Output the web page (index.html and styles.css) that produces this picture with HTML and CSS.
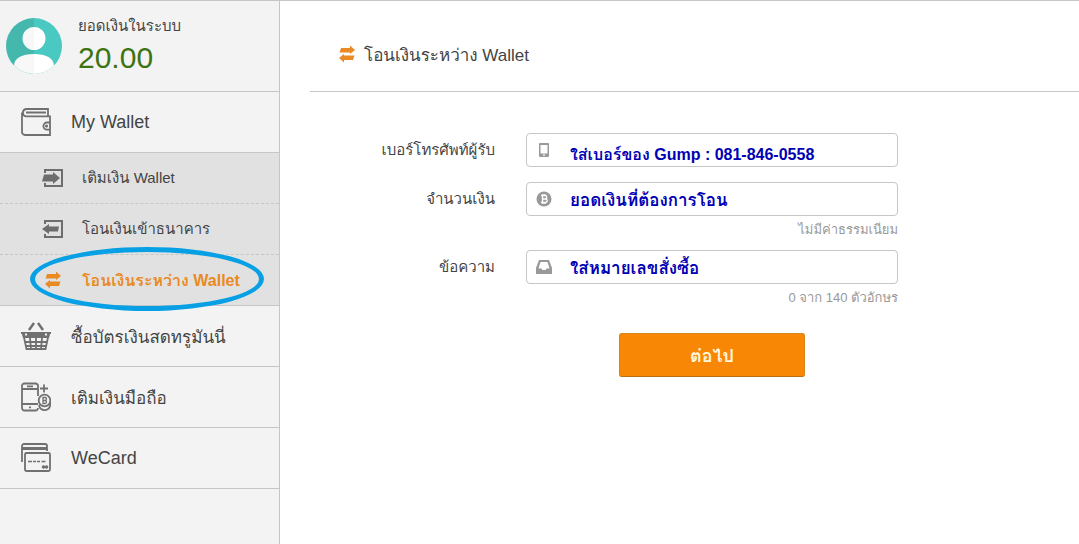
FILE: index.html
```html
<!DOCTYPE html>
<html lang="th">
<head>
<meta charset="utf-8">
<meta name="viewport" content="width=device-width, initial-scale=1">
<title>โอนเงินระหว่าง Wallet</title>
<link rel="stylesheet" href="styles.css">
</head>
<body>
<div class="layout">
  <aside class="sidebar">
    <div class="profile">
      <svg class="avatar" viewBox="0 0 56 56" aria-hidden="true">
        <defs><clipPath id="disc"><circle cx="28" cy="28" r="28"/></clipPath></defs>
        <g clip-path="url(#disc)">
          <path fill="#45b8ae" d="M0 0h28v56H0z"/>
          <path fill="#49c9c1" d="M28 0h28v56H28z"/>
          <path fill="#f8f8f8" d="M28 9a11.500 11.500 0 0 0 0 23zM28 36C16 36 8 40 8 48v8h20z"/>
          <path fill="#fff" d="M28 9a11.500 11.500 0 0 1 0 23zM28 36c12 0 20 4 20 12v8H28z"/>
        </g>
      </svg>
      <div class="balance">
        <span class="balance-label">ยอดเงินในระบบ</span>
        <strong class="balance-value">20.00</strong>
      </div>
    </div>
    <nav>
      <ul class="menu">
        <li class="menu-item">
          <a class="menu-link" href="#">
            <svg class="menu-icon" viewBox="0 0 30 30" aria-hidden="true">
              <path d="M27 8.500V2H5a3.700 3.700 0 0 0 0 7.300h24V15M29 23v5H4a3 3 0 0 1-3-3V5.500M5 5.500h20M29 15.500h-3a3.600 3.600 0 0 0 0 7.200h3z"/>
              <circle class="solid" cx="25.500" cy="19" r="1.600"/>
            </svg>
            <span>My Wallet</span>
          </a>
          <ul class="submenu">
            <li><a class="submenu-link" href="#">
              <svg class="submenu-icon" viewBox="0 0 22 20" aria-hidden="true">
                <path class="frame" d="M3 5V2h17v16H3v-3"/>
                <path class="solid" d="M2 6.500h9V4l7 6-7 6v-2.500H0z"/>
              </svg>
              <span>เติมเงิน Wallet</span>
            </a></li>
            <li><a class="submenu-link" href="#">
              <svg class="submenu-icon" viewBox="0 0 22 20" aria-hidden="true">
                <path class="frame" d="M3 5V2h17v16H3v-3"/>
                <path class="solid" d="M0 10l7-5v2.500h10l-1 5H7V15z"/>
              </svg>
              <span>โอนเงินเข้าธนาคาร</span>
            </a></li>
            <li class="circled"><a class="submenu-link active" href="#" aria-current="page">
              <svg class="submenu-icon" viewBox="0 0 22 20" aria-hidden="true">
                <path class="solid" d="M5 4h9V1.500L19 6l-5 4V8.500H3.500zM18.500 11.500L17 16H8v2.500L3 14l5-4v1.500z"/>
              </svg>
              <span>โอนเงินระหว่าง Wallet</span>
            </a>
            <span class="highlight"></span></li>
          </ul>
        </li>
        <li class="menu-item">
          <a class="menu-link thai" href="#">
            <svg class="menu-icon" viewBox="0 0 30 30" aria-hidden="true">
              <path class="solid" d="M0 11h30v2h-1l-1 4H2l-1-4H0z"/>
              <path d="M2.500 14l3 14h19l3-14M9 17l1 11M15 17v11M21 17l-1 11M4 21h22M5 25h20"/>
              <path class="thick" d="M8 9l5-7M22 9l-5-7"/>
              <path class="dots" d="M4 13.500h2M24 13.500h2"/>
            </svg>
            <span>ซื้อบัตรเงินสดทรูมันนี่</span>
          </a>
        </li>
        <li class="menu-item">
          <a class="menu-link thai" href="#">
            <svg class="menu-icon" viewBox="0 0 30 30" aria-hidden="true">
              <path d="M17 14V4a2.500 2.500 0 0 0-2.500-2.500h-11A2.500 2.500 0 0 0 1 4v22a2.500 2.500 0 0 0 2.500 2.500h11A2.500 2.500 0 0 0 17 26M1 7h16M1 22h16M6 4.300h6M8 25.300h2M19 6.500h8M23 2.500v8"/>
              <circle cx="23.500" cy="18.500" r="5.800"/>
              <path d="M18 23c1 7 11 7 11.300-1v-2"/>
              <path class="thin" d="M22 15.500v6h2a1.500 1.500 0 0 0 0-3h-2 2a1.500 1.500 0 0 0 0-3z"/>
            </svg>
            <span>เติมเงินมือถือ</span>
          </a>
        </li>
        <li class="menu-item">
          <a class="menu-link" href="#">
            <svg class="menu-icon" viewBox="0 0 30 30" aria-hidden="true">
              <path d="M1 19V3a2 2 0 0 1 2-2h21a2 2 0 0 1 2 2v5"/>
              <path class="solid" d="M1 4h25v3H1z"/>
              <rect x="4" y="10" width="25" height="18" rx="1.500"/>
              <path class="thin" d="M7 18.500h4M12 18.500h3M16 18.500h3M20.500 18.500h4"/>
              <circle class="solid" cx="22.500" cy="24" r="1.800"/>
              <circle class="solid" cx="25.500" cy="24" r="1.800"/>
            </svg>
            <span>WeCard</span>
          </a>
        </li>
      </ul>
    </nav>
  </aside>
  <main class="content">
    <header class="page-head">
      <svg class="head-icon" viewBox="2 1 18 18" aria-hidden="true">
        <path d="M5 4h9V1.500L19 6l-5 4V8.500H3.500zM18.500 11.500L17 16H8v2.500L3 14l5-4v1.500z"/>
      </svg>
      <h1 class="page-title">โอนเงินระหว่าง Wallet</h1>
    </header>
    <form class="form">
      <label class="label" for="phone">เบอร์โทรศัพท์ผู้รับ</label>
      <div class="field field-spaced">
        <svg class="field-icon" viewBox="0 0 16 16" aria-hidden="true">
          <path fill-rule="evenodd" d="M4 1h8a1 1 0 0 1 1 1v12a1 1 0 0 1-1 1H4a1 1 0 0 1-1-1V2a1 1 0 0 1 1-1zM4.500 3v8.500h7V3zM7 12.500h2v1.200H7z"/>
        </svg>
        <input class="input input-phone" id="phone" type="text" value="ใส่เบอร์ของ Gump : 081-846-0558">
      </div>
      <label class="label" for="amount">จำนวนเงิน</label>
      <div class="field">
        <svg class="field-icon" viewBox="0 0 16 16" aria-hidden="true">
          <circle cx="8" cy="8" r="7.500"/>
          <path class="coin-mark" d="M5 4.500h4a1.600 1.600 0 0 1 0 3.500H6.500 9.500a1.700 1.700 0 0 1 0 3.500H5M6.500 4.500v7M7 3v1.500M9 3v1.500M7 11.500V13M9 11.500V13"/>
        </svg>
        <input class="input" id="amount" type="text" value="ยอดเงินที่ต้องการโอน" aria-describedby="fee">
      </div>
      <p class="hint" id="fee">ไม่มีค่าธรรมเนียม</p>
      <label class="label" for="message">ข้อความ</label>
      <div class="field">
        <svg class="field-icon" viewBox="0 0 16 16" aria-hidden="true">
          <path fill-rule="evenodd" d="M3 1h10l3 8v6H0V9zM4.500 3l-2 6.500h3L6.500 11h3l1-1.500h3L11.500 3z"/>
        </svg>
        <input class="input" id="message" type="text" value="ใส่หมายเลขสั่งซื้อ" aria-describedby="count">
      </div>
      <p class="hint" id="count">0 จาก 140 ตัวอักษร</p>
      <button class="submit" type="submit">ต่อไป</button>
    </form>
  </main>
</div>
</body>
</html>
```
FILE: styles.css
```css
* { box-sizing: border-box; }

body {
  margin: 0;
  background: #fff;
  color: #444;
  font-family: "Liberation Sans", Arial, Loma, Waree, "Noto Sans Thai Looped", sans-serif;
  font-size: 15px;
}

ul, p, h1 { margin: 0; padding: 0; }
ul { list-style: none; }
a { color: inherit; text-decoration: none; }

.layout {
  display: flex;
  min-height: 100vh;
  border-top: 1px solid #c6c6c6;
}

.sidebar {
  flex: 0 0 280px;
  background: #f3f3f3;
  border-right: 1px solid #c6c6c6;
}

.profile {
  display: flex;
  align-items: center;
  gap: 16px;
  height: 91px;
  padding-left: 6px;
  border-bottom: 1px solid #c6c6c6;
}

.avatar { width: 56px; height: 56px; }

.balance { display: flex; flex-direction: column; }
.balance-label { line-height: 24px; }
.balance-value {
  color: #3d7310;
  font-size: 30px;
  font-weight: 400;
  line-height: 40px;
}

.menu-item { border-bottom: 1px solid #c6c6c6; }

.menu-link {
  display: flex;
  align-items: center;
  gap: 20px;
  height: 60px;
  padding-left: 21px;
  font-size: 18px;
}
.menu-link.thai { font-size: 17px; }

.menu-icon { width: 30px; height: 30px; }
.menu-icon * { fill: none; stroke: #707070; stroke-width: 1.8; }
.menu-icon .solid { fill: #707070; stroke: none; }
.menu-icon .thick { stroke-width: 2.5; }
.menu-icon .thin { stroke-width: 1.3; }
.menu-icon .dots { stroke: #f3f3f3; stroke-width: 2; }

.submenu {
  background: #e1e1e1;
  border-top: 1px solid #c6c6c6;
}
.submenu li + li { border-top: 1px dashed #c6c6c6; }

.submenu-link {
  display: flex;
  align-items: center;
  gap: 18px;
  height: 50px;
  padding-left: 42px;
}
.submenu-icon { width: 22px; height: 20px; fill: #6d6d6d; }
.submenu-icon .frame { fill: none; stroke: #6d6d6d; stroke-width: 2; }
.submenu-link.active { color: #e98a23; font-size: 16px; font-weight: 700; }
.submenu-link.active .submenu-icon { fill: #e98a23; }

.circled { position: relative; }
.highlight {
  position: absolute;
  inset: -8px 15px -6px 30px;
  border: 5px solid #08a0e4;
  border-radius: 50%;
  pointer-events: none;
}

.content { flex: 1; padding-left: 30px; }

.page-head {
  display: flex;
  align-items: center;
  gap: 8px;
  height: 91px;
  padding: 16px 28px 0;
  border-bottom: 1px solid #c6c6c6;
}
.head-icon { width: 18px; height: 18px; fill: #e98a23; }
.page-title { font-size: 17px; font-weight: 400; }

.form {
  display: grid;
  grid-template-columns: 185px minmax(200px, 372px);
  column-gap: 31px;
  padding-top: 41px;
}

.label {
  line-height: 34px;
  text-align: right;
}

.field {
  display: flex;
  align-items: center;
  gap: 18px;
  height: 34px;
  padding-left: 9px;
  border: 1px solid #c6c6c6;
  border-radius: 4px;
}
.field-spaced { margin-bottom: 15px; }
.field-icon { flex: none; width: 16px; height: 16px; fill: #999; }
.coin-mark { fill: none; stroke: #fff; stroke-width: 1.3; }

.input {
  flex: 1;
  min-width: 0;
  height: 32px;
  padding: 0;
  border: 0;
  outline: 0;
  background: transparent;
  color: #0000b4;
  font-family: inherit;
  font-size: 17px;
  font-weight: 700;
}
.input-phone {
  padding-top: 8px;
  font-size: 16px;
}

.hint {
  grid-column: 2;
  height: 34px;
  color: #999;
  font-size: 13px;
  line-height: 28px;
  text-align: right;
}

.submit {
  grid-column: 2;
  width: 186px;
  height: 44px;
  margin: 15px 0 0 93px;
  border: 1px solid #d8851c;
  border-bottom-color: #b96f16;
  border-radius: 3px;
  background: #f88706;
  color: #fff6dc;
  font-family: inherit;
  font-size: 18px;
  font-weight: 700;
}
```
